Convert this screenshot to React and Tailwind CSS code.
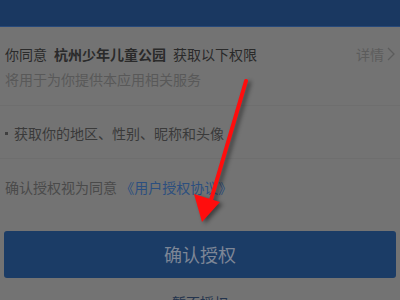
import React from "react";

const font = { fontFamily: '"Noto Sans CJK SC", "Noto Sans", sans-serif' };

export default function App() {
  return (
    <div className="relative w-[400px] h-[300px] overflow-hidden bg-[#737373]" style={font}>
      <div className="h-[27px] bg-[#1a3861] border-b border-[#27497a]" />

      <div className="px-[5px] pt-[17px] pb-[16px] flex flex-col gap-[5px]">
        <div className="flex items-center justify-between text-[14px] leading-[20px]">
          <span className="text-[#2a2a2a] flex gap-[7px]">
            <span>你同意</span>
            <span className="font-bold">杭州少年儿童公园</span>
            <span>获取以下权限</span>
          </span>
          <span className="flex items-center gap-[3px] text-[#5c5c5c]">
            详情
            <svg width="8" height="14" viewBox="0 0 8 14" fill="none">
              <path d="M1 1l6 6-6 6" stroke="#5c5c5c" strokeWidth="1.3" />
            </svg>
          </span>
        </div>
        <div className="text-[14px] leading-[20px] text-[#595959]">将用于为你提供本应用相关服务</div>
      </div>

      <div className="h-px bg-[#6e6e6e]" />

      <div className="px-[5px] pt-[17px] pb-[15px] flex items-center gap-[6px] text-[14px] leading-[20px] text-[#3a3a3a]">
        <span className="w-[3px] h-[3px] bg-[#3f3f3f]" />
        <span>获取你的地区、性别、昵称和头像</span>
      </div>

      <div className="h-px bg-[#6e6e6e]" />

      <div className="px-[5px] pt-[18px] text-[14px] leading-[20px] text-[#4a4a4a]">
        确认授权视为同意 <span className="text-[#2c4f7f]">《用户授权协议》</span>
      </div>

      <div className="mx-[4px] mt-[34px] h-[47px] rounded-[3px] bg-[#1b3c66] flex items-center justify-center text-[18px] text-[#7d8696]">
        确认授权
      </div>

      <div className="mt-[14px] text-center text-[14px] leading-[20px] text-[#24344d]">暂不授权</div>

      <svg
        className="absolute left-0 top-0"
        width="400"
        height="300"
        viewBox="0 0 400 300"
        style={{ filter: "drop-shadow(3px 2px 2px rgba(0,0,0,0.45))" }}
      >
        <line x1="246" y1="81" x2="211" y2="200" stroke="#ff0d0d" strokeWidth="4" strokeLinecap="round" />
        <polygon points="202,222 194,194 220,202" fill="#ff0d0d" />
      </svg>
    </div>
  );
}
